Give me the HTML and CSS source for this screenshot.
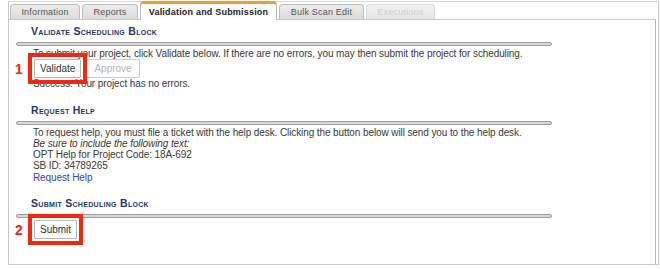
FILE: index.html
```
<!DOCTYPE html>
<html lang="en">
<head>
  <meta charset="UTF-8">
  <title>Validation and Submission</title>
  <link rel="stylesheet" href="styles.css">
</head>
<body>
  <div class="frame">
    <ul class="tabs">
      <li class="tab tab-info">Information</li>
      <li class="tab tab-reports">Reports</li>
      <li class="tab tab-active">Validation and Submission</li>
      <li class="tab tab-bulk">Bulk Scan Edit</li>
      <li class="tab tab-disabled">Executions</li>
    </ul>

    <div class="panel">
      <div class="section">
        <h3 class="section-title">Validate Scheduling Block</h3>
        <div class="rule"></div>
        <div class="section-body">
          <p class="line">To submit your project, click Validate below. If there are no errors, you may then submit the project for scheduling.</p>
          <div class="button-row">
            <span class="mark">
              <button class="btn">Validate</button>
              <span class="mark-ring"></span>
              <span class="mark-num">1</span>
            </span>
            <button class="btn" disabled>Approve</button>
          </div>
          <p class="line">Success: Your project has no errors.</p>
        </div>
      </div>

      <div class="section section-help">
        <h3 class="section-title">Request Help</h3>
        <div class="rule"></div>
        <div class="section-body">
          <p class="line">To request help, you must file a ticket with the help desk. Clicking the button below will send you to the help desk.</p>
          <p class="line"><em>Be sure to include the following text:</em></p>
          <p class="line">OPT Help for Project Code: 18A-692</p>
          <p class="line">SB ID: 34789265</p>
          <p class="line"><a href="#">Request Help</a></p>
        </div>
      </div>

      <div class="section section-submit">
        <h3 class="section-title">Submit Scheduling Block</h3>
        <div class="rule"></div>
        <div class="section-body">
          <div class="button-row">
            <span class="mark">
              <button class="btn">Submit</button>
              <span class="mark-ring"></span>
              <span class="mark-num">2</span>
            </span>
          </div>
        </div>
      </div>
    </div>
  </div>
</body>
</html>
```

FILE: styles.css
```
:root {
  --border-color: #c9c9c9;
  --title-color: #22376a;
  --text-color: #3a3a3a;
  --mark-color: #ef2a10;
  --link-color: #3b3fd6;
  --tab-accent: #f2a126;
}

body {
  margin: 0;
  font-family: "Liberation Sans", Arial, sans-serif;
  font-size: 10px;
  letter-spacing: -0.1px;
  color: var(--text-color);
  background-color: #fff;
}

.frame {
  margin: 1px 1px 0 8px;
  height: 262px;
  border: 1px solid var(--border-color);
  border-top-color: #d6d6d6;
  display: flex;
  flex-direction: column;
  padding-right: 2px;
}

/* Tabs */
.tabs {
  list-style: none;
  margin: 0;
  padding: 1px 0 0 1px;
  display: flex;
  align-items: flex-end;
  gap: 2px;
  height: 16px;
}

.tab {
  height: 15px;
  line-height: 15px;
  padding: 0;
  font-size: 9px;
  letter-spacing: 0.2px;
  white-space: nowrap;
  color: #555;
  background: linear-gradient(#ececec, #dcdcdc);
  border: 1px solid #bdbdbd;
  border-bottom: none;
  border-radius: 4px 4px 0 0;
  text-align: center;
  box-sizing: border-box;
}

.tab-info { width: 70px; }
.tab-reports { width: 56px; }
.tab-bulk { width: 85px; }

.tab-active {
  width: 137px;
  height: 19px;
  margin-bottom: -1px;
  border-top: 3px solid var(--tab-accent);
  background: #fff;
  color: #222;
  font-weight: bold;
  position: relative;
  line-height: 16px;
}

.tab-disabled {
  width: 69px;
  color: #cfcfcf;
  background: linear-gradient(#f0f0f0, #e6e6e6);
  border-color: #dadada;
}

/* Panel */
.panel {
  flex: 1;
  margin-left: -1px;
  margin-bottom: -1px;
  border: 1px solid var(--border-color);
  border-right-color: #b5b5b5;
  padding: 5px 0 0 7px;
}

.section-title {
  margin: 0;
  padding-left: 15px;
  font-size: 10.5px;
  line-height: 13px;
  font-variant: small-caps;
  font-weight: bold;
  letter-spacing: 0.3px;
  color: var(--title-color);
}

.rule {
  width: 534px;
  height: 2px;
  margin-top: 4px;
  border: 1px solid #9d9d9d;
  border-radius: 3px;
  background-color: #dadada;
}

.section-body {
  padding-left: 17px;
  margin-top: 2px;
}

.line {
  margin: 0;
  line-height: 11.3px;
}

.line a {
  color: var(--link-color);
  text-decoration: none;
}

.button-row {
  display: flex;
  gap: 5px;
  margin: 0 0 0 1px;
}

.btn {
  font-family: "Liberation Sans", Arial, sans-serif;
  font-size: 10px;
  height: 19px;
  padding: 0 5px;
  background-color: #fff;
  color: #333;
  border: 1px solid #b8b8b8;
  border-radius: 1px;
}

.btn:disabled {
  padding: 0 7px;
  color: #b4b4b4;
  border-color: #cfcfcf;
}

.mark {
  position: relative;
  display: inline-flex;
}

.mark-ring {
  position: absolute;
  top: -6px;
  bottom: -6px;
  left: -6px;
  right: -6px;
  border: 4px solid var(--mark-color);
}

.mark-num {
  position: absolute;
  left: -19px;
  top: 2px;
  font-size: 14px;
  font-weight: bold;
  color: var(--mark-color);
}

.section-help {
  margin-top: 14px;
}

.section-submit {
  margin-top: 14px;
}

.section-submit .button-row {
  margin-top: 1px;
}
```
